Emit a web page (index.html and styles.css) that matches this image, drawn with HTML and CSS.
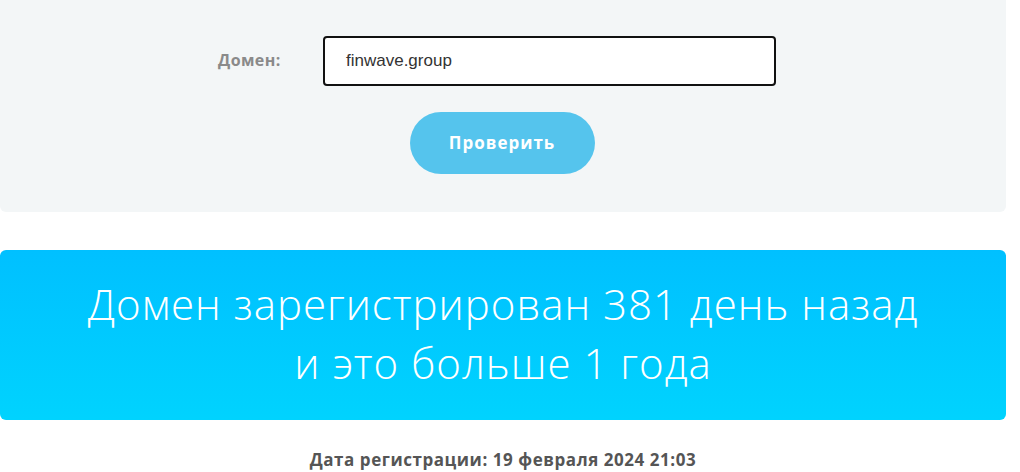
FILE: index.html
```html
<!DOCTYPE html>
<html lang="ru">
<head>
<meta charset="utf-8">
<link rel="stylesheet" href="styles.css">
</head>
<body>
<div class="page">
  <form class="check-panel">
    <div class="field-row">
      <label class="field-label" for="domain">Домен:</label>
      <div class="field-input">finwave.group</div>
    </div>
    <div class="button-row">
      <button type="button" class="check-btn">Проверить</button>
    </div>
  </form>
  <div class="result-banner">
    <p class="result-text">Домен зарегистрирован 381 день назад<br>и это больше 1 года</p>
  </div>
  <p class="reg-date">Дата регистрации: 19 февраля 2024 21:03</p>
</div>
</body>
</html>
```
FILE: styles.css
```css
* { box-sizing: border-box; }
html, body { margin: 0; padding: 0; background: #fff; }
body { font-family: "Open Sans", "Noto Sans", sans-serif; overflow: hidden; }
.page { width: 1006px; }
.check-panel {
  background: #f3f6f7;
  border-radius: 0 0 6px 6px;
  padding: 36px 0 38px;
  margin: 0;
}
.field-row {
  display: flex;
  align-items: center;
  height: 50px;
}
.field-label {
  width: 323px;
  padding-left: 218px;
  padding-bottom: 2px;
  font-weight: 700;
  font-size: 16px;
  letter-spacing: 0.4px;
  color: #8a8a8a;
}
.field-input {
  width: 453px;
  height: 50px;
  border: 2px solid #111;
  border-radius: 4px;
  background: #fff;
  padding-left: 21px;
  display: flex;
  align-items: center;
  font-family: "Liberation Sans", Arial, sans-serif;
  font-size: 17px;
  color: #333;
}
.button-row {
  display: flex;
  justify-content: center;
  margin-top: 26px;
}
.check-btn {
  width: 185px;
  height: 62px;
  border: 0;
  border-radius: 31px;
  background: #55c4ed;
  color: #fff;
  font-family: "Open Sans", sans-serif;
  font-weight: 700;
  font-size: 17px;
  letter-spacing: 1px;
  padding: 0 0 2px;
  margin-left: -2px;
}
.result-banner {
  margin-top: 38px;
  height: 170px;
  padding-bottom: 4px;
  border-radius: 6px;
  background: linear-gradient(180deg, #00c0ff 0%, #00d3fe 100%);
  display: flex;
  align-items: center;
  justify-content: center;
}
.result-text {
  margin: 0;
  color: #fff;
  font-weight: 300;
  font-size: 42px;
  line-height: 59px;
  text-align: center;
  letter-spacing: 1px;
}
.reg-date {
  margin: 28px 0 0;
  text-align: center;
  font-weight: 700;
  font-size: 17px;
  letter-spacing: 0.55px;
  color: #555;
}
```
